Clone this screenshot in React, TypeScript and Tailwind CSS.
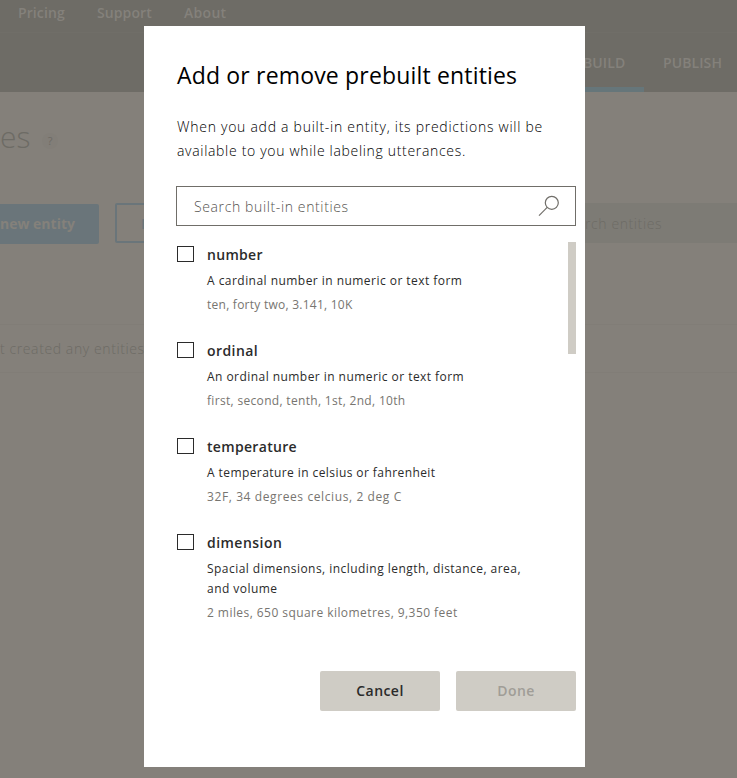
const entities = [
  {
    name: 'number',
    nameClass: 'tracking-[0.3px]',
    lines: ['A cardinal number in numeric or text form'],
    lineClass: 'tracking-[0.46px]',
    examples: 'ten, forty two, 3.141, 10K',
    exampleClass: 'tracking-[0.25px]',
  },
  {
    name: 'ordinal',
    nameClass: 'tracking-[0.42px]',
    lines: ['An ordinal number in numeric or text form'],
    lineClass: 'tracking-[0.45px]',
    examples: 'first, second, tenth, 1st, 2nd, 10th',
    exampleClass: 'tracking-[0.32px]',
  },
  {
    name: 'temperature',
    nameClass: 'tracking-[0.32px]',
    lines: ['A temperature in celsius or fahrenheit'],
    lineClass: 'tracking-[0.42px]',
    examples: '32F, 34 degrees celcius, 2 deg C',
    exampleClass: 'tracking-[0.6px]',
  },
  {
    name: 'dimension',
    nameClass: 'tracking-[0.46px]',
    lines: ['Spacial dimensions, including length, distance, area,', 'and volume'],
    lineClass: 'tracking-[0.46px]',
    examples: '2 miles, 650 square kilometres, 9,350 feet',
    exampleClass: 'tracking-[0.44px]',
  },
];

function Backdrop() {
  return (
    <div className="flex h-full flex-col bg-[#84807a] whitespace-nowrap">
      <div className="flex h-[33px] items-start border-b border-[#706e68] bg-[#6e6c66] pt-[3px] pl-[18px] text-[14px] leading-5 font-semibold text-[#84817b]">
        <span className="w-[79px] tracking-[0.1px]">Pricing</span>
        <span className="w-[87px] tracking-[0.1px]">Support</span>
        <span className="tracking-[0.3px]">About</span>
      </div>
      <div className="flex h-[59px] justify-end bg-[#6e6c66] text-[14px] leading-5 font-semibold text-[#84817b]">
        <div className="flex w-[80px] flex-col justify-between pt-5">
          <span className="pl-[19px] tracking-[0.1px]">BUILD</span>
          <div className="h-[5px] bg-[#66767a]" />
        </div>
        <span className="w-[93px] pt-5 pl-[19px] tracking-[0.1px]">PUBLISH</span>
      </div>
      <div className="flex h-[111px] items-start pt-[25px] text-[#6d6b65]">
        <div className="w-[29px] text-[30px] leading-10 font-light">es</div>
        <div className="mt-4 ml-[13px] flex size-4 items-center justify-center rounded-full bg-[#827e78] text-[11px]">?</div>
      </div>
      <div className="flex h-10 justify-between">
        <div className="flex">
          <div className="mt-px flex h-10 w-[99px] items-center rounded-r-xs bg-[#6a757a] pb-0.5 text-[14px] font-bold text-[#84817b]">
            new entity
          </div>
          <div className="ml-4 flex w-[120px] items-center rounded-xs border-2 border-[#6a757a] pl-6 text-[14px] font-semibold text-[#6a757a]">
            M
          </div>
        </div>
        <div className="flex w-[177px] items-center bg-[#7d7b75] pl-[25px] text-[14px] font-light tracking-[0.6px] text-[#6d6b65]">
          rch entities
        </div>
      </div>
      <div className="mt-[81px] flex h-[49px] items-center border-y border-[#817d77] text-[14px] text-[#6d6b65]">
        <div className="font-light tracking-[0.6px]">t created any entities</div>
      </div>
    </div>
  );
}

function SearchIcon() {
  return (
    <svg className="h-[22px] w-[22px]" viewBox="0 0 22 22" fill="none" stroke="#706e69" strokeWidth="1.2">
      <circle cx="13.8" cy="7.8" r="6.5" />
      <path d="M9.2 12.4 1 20.6" />
    </svg>
  );
}

export default function App() {
  return (
    <div className="relative h-[778px] w-[737px] overflow-hidden font-['Open_Sans','Noto_Sans',sans-serif]">
      <Backdrop />
      <div className="absolute top-[26px] left-[144px] flex h-[741px] w-[441px] flex-col bg-white pt-[31px] pr-[9px] pl-8 whitespace-nowrap">
        <h1 className="pl-px text-[23px] leading-9 tracking-[0.17px] text-black">Add or remove prebuilt entities</h1>
        <p className="mt-[22px] pl-px text-[14px] leading-6 font-light text-black">
          <span className="tracking-[0.73px]">When you add a built-in entity, its predictions will be</span>
          <br />
          <span className="tracking-[0.68px]">available to you while labeling utterances.</span>
        </p>
        <div className="mt-[23px] flex h-10 items-center justify-between border border-[#706e69] pr-[15px] pl-[17px]">
          <span className="text-[14px] font-light tracking-[0.62px] text-[#55534f]">Search built-in entities</span>
          <SearchIcon />
        </div>
        <div className="mt-4 flex h-[413px] items-start justify-between">
          <ul>
            {entities.map((e) => (
              <li key={e.name} className="flex h-24 pl-px">
                <div className="mt-1 h-4 w-[17px] shrink-0 border border-[#2b2b2b]" />
                <div className="ml-[13px] pt-0.5 text-[12px] leading-5">
                  <div className={`text-[14px] leading-[22px] font-semibold text-[#2b2b2b] ${e.nameClass}`}>{e.name}</div>
                  <div className={`mt-[5px] text-[#2b2b2b] ${e.lineClass}`}>
                    {e.lines.map((line) => (
                      <div key={line}>{line}</div>
                    ))}
                  </div>
                  <div className={`mt-1 text-[#777570] ${e.exampleClass}`}>{e.examples}</div>
                </div>
              </li>
            ))}
          </ul>
          <div className="h-28 w-2 bg-[#cfccc5]" />
        </div>
        <div className="mt-4 flex justify-end gap-4 text-[14px] font-semibold tracking-[0.45px]">
          <button className="h-10 w-[120px] rounded-xs bg-[#cfccc5] pb-0.5 text-[#2b2b2b]">Cancel</button>
          <button className="h-10 w-[120px] rounded-xs bg-[#cfccc5] pb-0.5 text-[#a09d97]">Done</button>
        </div>
      </div>
    </div>
  );
}
